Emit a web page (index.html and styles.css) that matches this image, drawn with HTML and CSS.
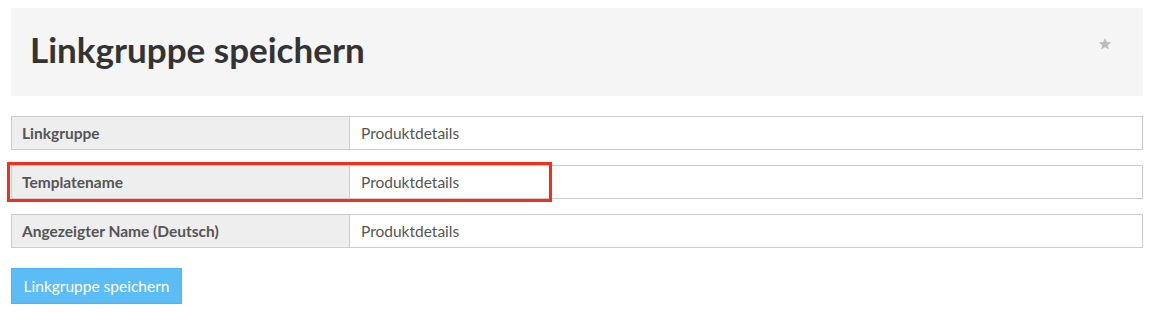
FILE: index.html
```html
<!DOCTYPE html>
<html lang="de">
<head>
  <meta charset="UTF-8" />
  <title>Linkgruppe speichern</title>
  <link rel="stylesheet" href="styles.css">
</head>
<body>

<div class="page-header">
  <h1>Linkgruppe speichern</h1>
  <span class="fav-star" title="Favorit">
    <svg width="14" height="14" viewBox="0 0 24 24"><path d="M12 1.5l3.1 6.9 7.4.7-5.6 5 1.7 7.4L12 17.6l-6.6 3.9 1.7-7.4-5.6-5 7.4-.7z" fill="#bdbdbd"/></svg>
  </span>
</div>

<form class="edit-form">
  <div class="form-row">
    <label class="form-label">Linkgruppe</label>
    <div class="form-value">Produktdetails</div>
  </div>
  <div class="form-row">
    <label class="form-label">Templatename</label>
    <div class="form-value">Produktdetails</div>
    <div class="highlight"></div>
  </div>
  <div class="form-row">
    <label class="form-label">Angezeigter Name (Deutsch)</label>
    <div class="form-value">Produktdetails</div>
  </div>

  <button type="button" class="save-button">Linkgruppe speichern</button>
</form>

</body>
</html>
```

FILE: styles.css
```css
body {
  font-family: Lato, "Open Sans", sans-serif;
  margin: 0;
  padding: 8px 9px 0 11px;
  background-color: #fff;
  color: #555;
}
.page-header {
  background-color: #f5f5f5;
  height: 88px;
  display: flex;
  align-items: center;
  justify-content: space-between;
  padding: 0 31px 0 19px;
}
.page-header h1 {
  margin: 0;
  font-size: 35px;
  font-weight: 700;
  color: #333;
  position: relative;
  top: -3px;
}
.fav-star {
  display: flex;
  position: relative;
  top: -8px;
}
.edit-form {
  margin-top: 20px;
}
.form-row {
  position: relative;
  display: flex;
  height: 34px;
  border: 1px solid #ccc;
  margin-bottom: 15px;
  box-sizing: border-box;
  font-size: 15.5px;
}
.form-label {
  width: 338px;
  background-color: #eee;
  border-right: 1px solid #ccc;
  font-weight: 700;
  padding-left: 10px;
  display: flex;
  align-items: center;
  box-sizing: border-box;
}
.form-value {
  flex: 1;
  padding-left: 11px;
  display: flex;
  align-items: center;
}
.highlight {
  position: absolute;
  left: -5px;
  top: -4px;
  width: 545px;
  height: 40px;
  border: 3px solid #f0301e;
  box-sizing: border-box;
  pointer-events: none;
}
.save-button {
  margin-top: 5px;
  background-color: #5cbcf6;
  color: white;
  border: 1px solid #4fb3ef;
  width: 171px;
  height: 36px;
  padding: 0;
  font-family: inherit;
  font-size: 15.5px;
  cursor: pointer;
}
```
